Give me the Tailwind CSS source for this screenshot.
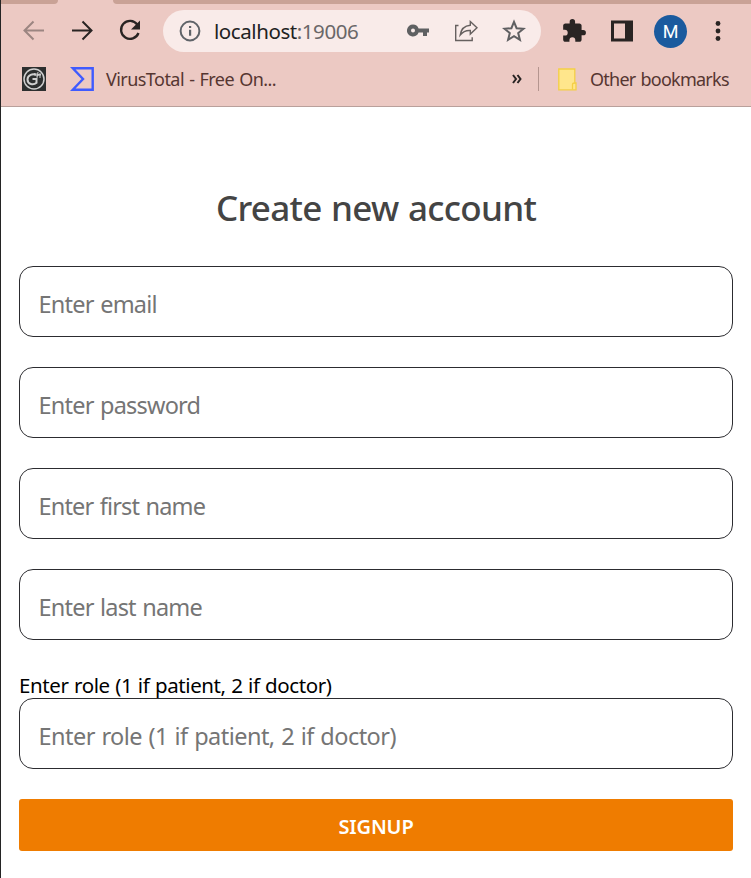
<!DOCTYPE html>
<html lang="en">
<head>
<meta charset="utf-8">
<title>Create new account</title>
<script src="https://cdn.jsdelivr.net/npm/@tailwindcss/browser@4"></script>
</head>
<body class="h-[878px] w-[751px] overflow-hidden border-l border-[#242424] bg-white font-['Noto_Sans',sans-serif]">
<header class="h-[107px] border-b border-[#b9a09b] bg-[#ecc9c3]">
  <div class="flex h-1 justify-between bg-[#ecc9c3]">
    <div class="w-[57px] rounded-br-[5px] bg-[#c9a296]"></div>
    <div class="w-[638px] rounded-bl-[5px] bg-[#c9a296]"></div>
  </div>
  <div class="flex h-[54px] items-center">
    <svg class="ml-[21px] size-6 shrink-0" viewBox="0 0 24 24" fill="none" stroke="#9b8581" stroke-width="2"><path d="M22 11.500H3M11.500 2.500l-9 9 9 9"/></svg>
    <svg class="ml-6 size-6 shrink-0" viewBox="0 0 24 24" fill="none" stroke="#292423" stroke-width="2"><path d="M2 11.500h19M12.500 2.500l9 9-9 9"/></svg>
    <svg class="ml-6 size-6 shrink-0" viewBox="0 0 24 24"><path d="M19.300 5.500A9 9 0 1 0 20.500 14" fill="none" stroke="#292423" stroke-width="2.300"/><path d="M22 1.500v9h-9z" fill="#292423"/></svg>
    <div class="ml-[21px] flex h-[42px] w-[378px] shrink-0 items-center rounded-full bg-[#f9ebe9]">
      <svg class="ml-[16px] size-[22px] shrink-0" viewBox="0 0 22 22"><circle cx="11" cy="11" r="9.400" fill="none" stroke="#5f6368" stroke-width="2"/><path d="M10 9.800h2.200v6H10zM10 6h2.200v2.100H10z" fill="#5f6368"/></svg>
      <span class="ml-[13px] w-[146px] whitespace-nowrap text-[20.500px] leading-[42px] tracking-[-0.430px] text-[#222]">localhost<span class="text-[#6a6768]">:19006</span></span>
      <svg class="ml-[47px] h-6 w-[22px] shrink-0" viewBox="0 0 22 24"><path fill="#5f6062" fill-rule="evenodd" d="M6 5.500a6 6 0 0 1 5.600 4H22v4h-2v3.500h-4v-3.500h-4.400A6 6 0 1 1 6 5.500zm0 4a2 2 0 1 0 0 4 2 2 0 0 0 0-4z"/></svg>
      <svg class="ml-[25px] size-6 shrink-0" viewBox="0 0 24 24" fill="none" stroke="#66605f" stroke-width="1.400"><path d="M4.500 6.500H1.700v15h16.500v-3.200"/><path d="M16.300 2.500l6.700 6.300-6.700 6.300v-3.600c-4.500-.3-7.500 1.200-10.100 4.500C7 10.500 10.500 6.700 16.300 6.200z"/></svg>
      <svg class="ml-6 size-6 shrink-0" viewBox="0 0 24 24" fill="none" stroke="#5f5f61" stroke-width="2"><path d="M12 2.800l2.600 6.400 6.900.5-5.300 4.400 1.700 6.700L12 17.200l-5.900 3.600 1.700-6.700-5.300-4.400 6.900-.5z"/></svg>
    </div>
    <svg class="ml-[20px] size-[26px] shrink-0" viewBox="0 0 24 24" fill="#292423"><path d="M20.500 11H19V7c0-1.100-.9-2-2-2h-4V3.500a2.500 2.500 0 0 0-5 0V5H4c-1.100 0-2 .9-2 2v3.800h1.500a2.700 2.700 0 0 1 0 5.400H2V20c0 1.100.9 2 2 2h3.800v-1.500a2.700 2.700 0 0 1 5.400 0V22H17c1.100 0 2-.9 2-2v-4h1.500a2.500 2.500 0 0 0 0-5z"/></svg>
    <svg class="ml-6 h-[22px] w-[22px] shrink-0" viewBox="0 0 22 22"><path fill="#292423" fill-rule="evenodd" d="M0 .500h22v21H0zM3 3.500v15h11v-15z"/></svg>
    <div class="ml-[21px] flex size-[33px] shrink-0 items-center justify-center rounded-full bg-[#1a5a9e] font-[Roboto,sans-serif] text-[18px] text-white">M</div>
    <svg class="ml-[28px] h-6 w-[6px] shrink-0" viewBox="0 0 6 24" fill="#292423"><circle cx="3" cy="4.500" r="2.400"/><circle cx="3" cy="12" r="2.400"/><circle cx="3" cy="19.500" r="2.400"/></svg>
  </div>
  <div class="flex h-[42px] items-center text-[18px] text-[#563631]">
    <svg class="ml-[21px] size-6 shrink-0" viewBox="0 0 24 24" fill="none" stroke="#d0d0d0"><path fill="#2d2f2f" stroke="none" d="M0 0h24v24H0z"/><circle cx="12" cy="12" r="10" stroke-width="1.500"/><path d="M14 8.200C11 6 5.500 8 5.500 12.500c0 5 6 6 9 3.300V12h-4" stroke-width="2"/><path d="M12 6.500l7 1.500M14 9l5-1.500M16 5l-1 6M18 6v5" stroke-width="1"/></svg>
    <svg class="ml-6 size-6 shrink-0" viewBox="0 0 24 24" fill="none" stroke="#3f5bff" stroke-width="2.400"><path d="M2.800 1.300h19.900v21.400H2.800L13 12z"/></svg>
    <span class="ml-[12px] w-[172px] whitespace-nowrap tracking-[-0.550px] [word-spacing:1px]">VirusTotal - Free On...</span>
    <svg class="ml-[234px] h-[10px] w-[10px] shrink-0" viewBox="0 0 10 10" fill="none" stroke="#292423" stroke-width="2"><path d="M1 1l3 4-3 4M5.500 1l3 4-3 4"/></svg>
    <div class="ml-[16px] h-6 w-px bg-[#b4958f]"></div>
    <svg class="ml-[19px] h-[23px] w-[19px] shrink-0" viewBox="0 0 19 23"><path d="M.800 1h16v14h1.200v6.800H.800z" fill="#ffe68c" stroke="#f4cf45" stroke-width="1.300"/><path d="M14.500 21.500v-5c0-1 .5-1.500 2.300-1.500" fill="none" stroke="#f4cf45" stroke-width="1.300"/></svg>
    <span class="ml-[13px] whitespace-nowrap tracking-[-0.750px] [word-spacing:1px]">Other bookmarks</span>
  </div>
</header>
<main class="flex flex-col pl-[18px] pr-[18px] pt-[72px]">
  <h1 class="h-[58px] whitespace-nowrap text-center text-[35px] font-medium leading-[58px] tracking-[-0.700px] text-[#444] [word-spacing:1px]">Create new account</h1>
  <form class="mt-[29px] flex flex-col">
    <div class="flex flex-col gap-[30px]">
      <input class="h-[71px] rounded-[14px] border border-[#2c2c30] px-[18.500px] pt-1 text-[23.500px] tracking-[-0.750px] [word-spacing:1px] placeholder:text-[#757575]" placeholder="Enter email">
      <input class="h-[71px] rounded-[14px] border border-[#2c2c30] px-[18.500px] pt-1 text-[23.500px] tracking-[-0.780px] [word-spacing:1px] placeholder:text-[#757575]" placeholder="Enter password">
      <input class="h-[71px] rounded-[14px] border border-[#2c2c30] px-[18.500px] pt-1 text-[23.500px] tracking-[-0.820px] [word-spacing:1px] placeholder:text-[#757575]" placeholder="Enter first name">
      <input class="h-[71px] rounded-[14px] border border-[#2c2c30] px-[18.500px] pt-1 text-[23.500px] tracking-[-0.780px] [word-spacing:1px] placeholder:text-[#757575]" placeholder="Enter last name">
    </div>
    <label class="mt-[31px] h-[27px] whitespace-nowrap text-[20.500px] leading-[29px] tracking-[-0.400px] text-black [word-spacing:0.600px]" for="role">Enter role (1 if patient, 2 if doctor)</label>
    <input id="role" class="h-[71px] rounded-[14px] border border-[#2c2c30] px-[18.500px] pt-1 text-[23.500px] tracking-[-0.540px] [word-spacing:1px] placeholder:text-[#757575]" placeholder="Enter role (1 if patient, 2 if doctor)">
    <button type="button" class="mt-[30px] h-[52px] rounded-[3px] bg-[#ef7c00] pt-[3px] text-[20px] font-semibold tracking-[-0.150px] text-white">SIGNUP</button>
  </form>
</main>
</body>
</html>
